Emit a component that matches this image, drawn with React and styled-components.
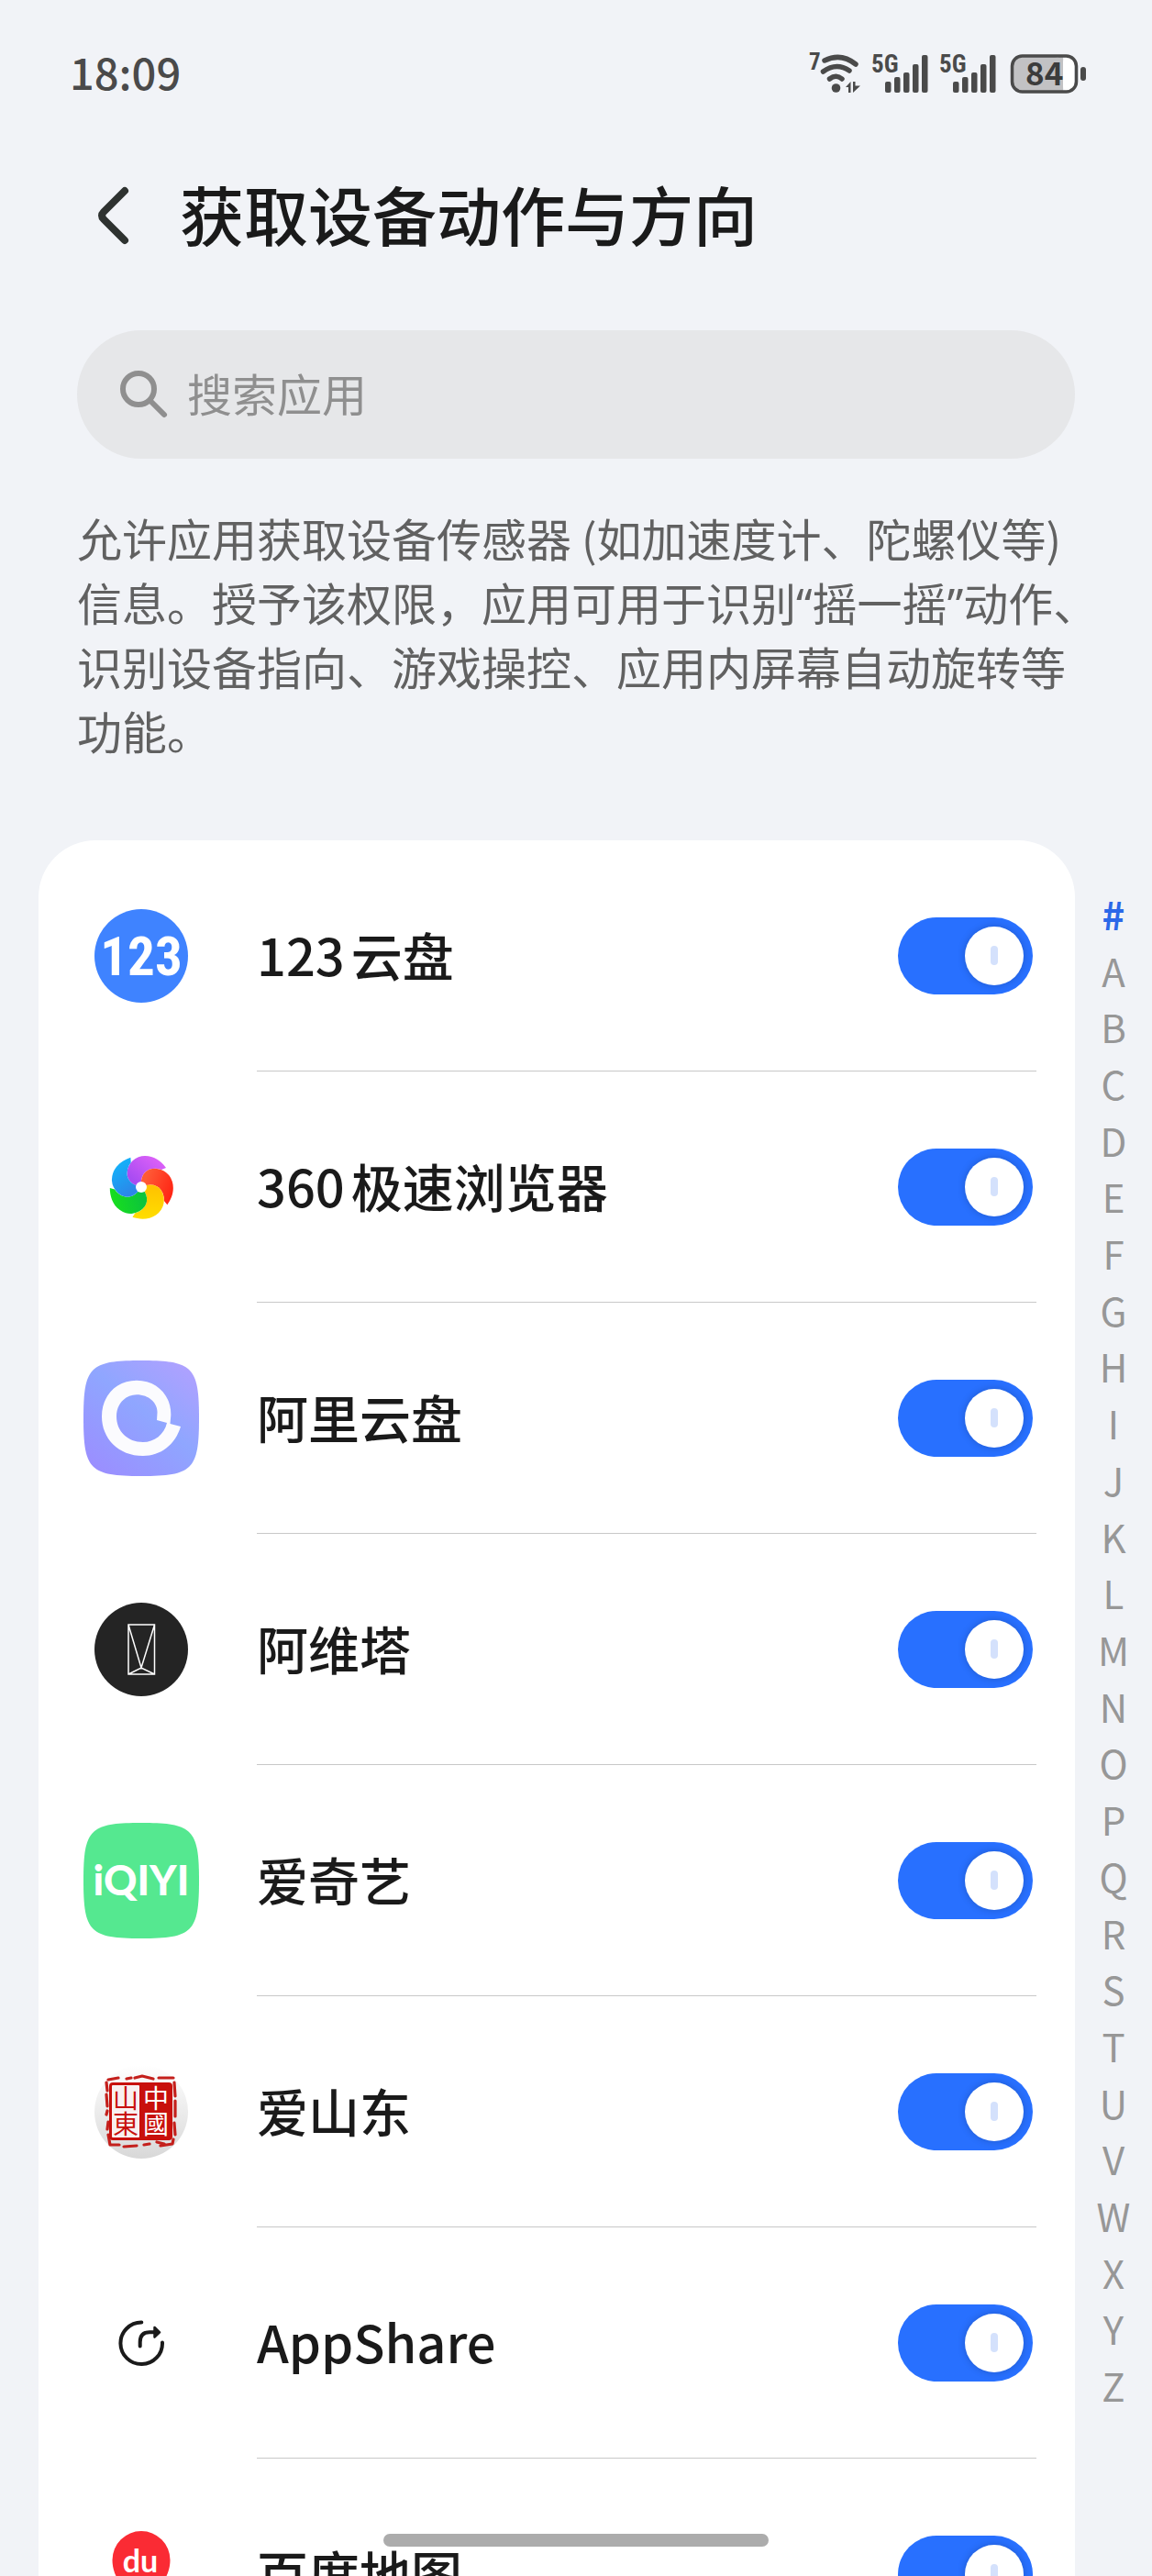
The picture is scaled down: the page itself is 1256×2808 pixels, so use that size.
import React, { useState } from "react";
import styled, { createGlobalStyle } from "styled-components";

const GlobalStyle = createGlobalStyle`
  * {
    box-sizing: border-box;
  }
  body {
    margin: 0;
    background-color: #f1f3f7;
    color: #1a1a1a;
    font-family: "Noto Sans CJK SC", sans-serif;
    text-autospace: normal;
  }
`;

const Page = styled.div`
  display: flex;
  flex-direction: column;
  height: 100vh;
  overflow: hidden;
`;

const StatusBar = styled.div`
  display: flex;
  align-items: center;
  justify-content: space-between;
  flex-shrink: 0;
  height: 160px;
  padding: 0 72px 0 76px;
  color: #4a4a4a;
`;

const Clock = styled.time`
  padding-bottom: 4px;
  font-size: 47px;
  font-weight: 500;
  line-height: 60px;
`;

const StatusIcons = styled.div`
  display: flex;
  align-items: center;
  gap: 12px;
`;

const StatusSvg = styled.svg`
  display: block;
  overflow: visible;
  fill: #4a4a4a;
`;

const Header = styled.header`
  display: flex;
  align-items: center;
  flex-shrink: 0;
  height: 150px;
  padding: 0 84px;
`;

const BackButton = styled.button`
  display: flex;
  align-items: center;
  justify-content: center;
  width: 80px;
  height: 80px;
  margin-right: 32px;
  padding: 0;
  border: none;
  background: none;
  cursor: pointer;
`;

const Title = styled.h1`
  margin: 0;
  padding-bottom: 4px;
  font-size: 70px;
  font-weight: 500;
  line-height: 100px;
`;

const SearchBox = styled.label`
  display: flex;
  align-items: center;
  flex-shrink: 0;
  gap: 20px;
  height: 140px;
  margin: 50px 84px 0;
  padding: 0 46px;
  border-radius: 70px;
  background-color: #e6e7e9;
`;

const SearchInput = styled.input`
  flex: 1;
  min-width: 0;
  padding: 0 0 4px;
  border: none;
  background: none;
  font-family: inherit;
  font-size: 49px;
  line-height: 70px;
  &::placeholder {
    color: #8f8f8f;
    opacity: 1;
  }
  &:focus {
    outline: none;
  }
`;

const Description = styled.p`
  flex-shrink: 0;
  margin: 51px 84px 85px;
  color: #616161;
  font-size: 49px;
  line-height: 70px;
  white-space: nowrap;
`;

const Quote = styled.span`
  font-family: "Noto Sans", sans-serif;
  line-height: 1;
`;

const Content = styled.main`
  display: flex;
  flex: 1;
  min-height: 0;
`;

const AppList = styled.ul`
  flex: 1;
  margin: 0 0 0 42px;
  padding: 0;
  overflow: hidden;
  border-radius: 62px 62px 0 0;
  background-color: white;
  list-style: none;
`;

const AppRow = styled.li`
  display: flex;
  align-items: center;
  gap: 63px;
  height: 252px;
  padding: 0 42px 0 49px;
`;

const AppIcon = styled.svg`
  flex-shrink: 0;
  width: 126px;
  height: 126px;
`;

const AppBody = styled.div`
  display: flex;
  align-items: center;
  justify-content: space-between;
  flex: 1;
  height: 100%;
  padding-right: 4px;
  border-bottom: 1px solid #c8c8c8;
`;

const AppName = styled.label`
  padding-bottom: 4px;
  font-size: 56px;
  font-weight: 500;
  line-height: 80px;
`;

const Switch = styled.input`
  position: relative;
  width: 147px;
  height: 84px;
  margin: 0;
  border-radius: 42px;
  appearance: none;
  background-color: #c4c6cb;
  cursor: pointer;
  &::before {
    content: "";
    position: absolute;
    top: 10px;
    left: 10px;
    width: 64px;
    height: 64px;
    border-radius: 50%;
    background-color: white;
    box-shadow: 0 0 8px rgba(0, 0, 0, 0.2);
  }
  &::after {
    content: "";
    position: absolute;
    top: 31px;
    left: 38px;
    width: 8px;
    height: 21px;
    border-radius: 4px;
    background-color: #d4e1fc;
  }
  &:checked {
    background-color: #2870ff;
  }
  &:checked::before {
    left: 73px;
  }
  &:checked::after {
    left: 101px;
  }
`;

const IndexBar = styled.nav`
  display: flex;
  flex-direction: column;
  width: 84px;
  padding: 49px 0 177px;
`;

const IndexLink = styled.a`
  display: flex;
  align-items: center;
  justify-content: center;
  flex: 1;
  min-height: 0;
  color: ${props => (props.$active ? "#2b68e8" : "#979797")};
  font-size: 42px;
  font-weight: ${props => (props.$active ? 700 : 400)};
  line-height: 42px;
  text-decoration: none;
`;

const HomeBar = styled.div`
  position: fixed;
  bottom: 32px;
  left: 50%;
  width: 420px;
  height: 14px;
  border-radius: 7px;
  background-color: #acacac;
  transform: translateX(-50%);
`;

const narrow = "'Liberation Sans Narrow', 'Roboto Condensed', Roboto, sans-serif";

const Wifi = () => (
  <StatusSvg width="56" height="44" viewBox="0 0 56 44">
    <text x="0" y="18" fontSize="25" fontWeight="700" fontFamily={narrow}>
      7
    </text>
    <g fill="none" stroke="#4a4a4a" strokeWidth="5.5" strokeLinecap="round">
      <path d="M17 8 C29 2 41 4 51 12" />
      <path d="M15.500 20 C25 13 35 13 44 19" />
      <path d="M22.500 28 C27 24.500 32 24.500 36 28" />
    </g>
    <circle cx="29.500" cy="38" r="4.800" />
    <path d="M40 37 L45.500 31 V43 H43 V37 Z M48 31 V43 L56 35.500 H50.500 V31 Z" />
  </StatusSvg>
);

const Signal = () => (
  <StatusSvg width="62" height="44" viewBox="0 0 62 44">
    <text x="0" y="21" fontSize="27" fontWeight="700" fontFamily={narrow}>
      5G
    </text>
    <rect x="15" y="31" width="6.500" height="12" rx="2" />
    <rect x="25" y="26" width="6.500" height="17" rx="2" />
    <rect x="35" y="21" width="6.500" height="22" rx="2" />
    <rect x="45" y="12" width="6.500" height="31" rx="2" />
    <rect x="55" y="2" width="6.500" height="41" rx="2" />
  </StatusSvg>
);

const Battery = () => (
  <StatusSvg width="86" height="44" viewBox="0 0 86 44">
    <rect x="6" y="4" width="55" height="38" rx="9" fill="#c2c2c4" />
    <rect x="61" y="4" width="12" height="38" rx="6" fill="#fff" />
    <rect x="56" y="4" width="5" height="38" fill="#c2c2c4" />
    <rect
      x="5.500"
      y="3"
      width="70"
      height="39"
      rx="11"
      fill="none"
      stroke="#4a4a4a"
      strokeWidth="3.500"
    />
    <rect x="80" y="15" width="6" height="15" rx="3" />
    <text x="20" y="35" fontSize="35" fontWeight="700" fill="#3c3c3c">
      84
    </text>
  </StatusSvg>
);

const BackIcon = () => (
  <svg width="40" height="66" viewBox="0 0 40 66">
    <path
      d="M32 6 L9 29 Q5 33 9 37 L32 60"
      fill="none"
      stroke="#2e3230"
      strokeWidth="8"
      strokeLinecap="round"
    />
  </svg>
);

const SearchIcon = () => (
  <svg width="54" height="54" viewBox="0 0 54 54">
    <g fill="none" stroke="#8f8f8f" strokeWidth="6" strokeLinecap="round">
      <circle cx="21" cy="21" r="17" />
      <path d="M34 34 L49 49" />
    </g>
  </svg>
);

const Pan123Icon = () => (
  <AppIcon viewBox="0 0 126 126">
    <circle cx="63" cy="63" r="51" fill="#3f83ff" />
    <text
      x="63"
      y="84"
      fill="#fff"
      fontSize="59"
      fontWeight="700"
      fontFamily={narrow}
      textAnchor="middle">
      123
    </text>
  </AppIcon>
);

const petals = [
  ["#a94cf2", "#e062f8"],
  ["#ff5a36", "#ff1f10"],
  ["#ffc400", "#ffe100"],
  ["#0cc43c", "#18e01c"],
  ["#2c86e8", "#12b4fb"],
];

const Browser360Icon = () => (
  <AppIcon viewBox="0 0 126 126">
    <defs>
      {petals.map((colors, index) => (
        <linearGradient key={index} id={"petal" + index} x1="0" y1="1" x2="1" y2="0">
          <stop offset="0.200" stopColor={colors[0]} />
          <stop offset="0.900" stopColor={colors[1]} />
        </linearGradient>
      ))}
    </defs>
    <g transform="translate(63 63)">
      {petals.map((colors, index) => (
        <path
          key={index}
          d="M0 0 C-10 -2 -15.500 -8 -15.500 -15 A19.500 19.500 0 0 1 4.500 -34 C14 -34 22 -28 27 -21 L22 -19 A19.500 19.500 0 0 0 9.500 -19.400 C2.800 -17.200 -1.200 -10.100 0 0 Z"
          fill={"url(#petal" + index + ")"}
          transform={"rotate(" + index * 72 + ")"}
        />
      ))}
      <circle r="6" fill="#fff" />
    </g>
  </AppIcon>
);

const squircle =
  "M63 0 C119 0 126 7 126 63 C126 119 119 126 63 126 C7 126 0 119 0 63 C0 7 7 0 63 0 Z";

const AliyunIcon = () => (
  <AppIcon viewBox="0 0 126 126">
    <defs>
      <linearGradient id="aliyun" x1="1" y1="0" x2="0.200" y2="1">
        <stop offset="0" stopColor="#b4a0ff" />
        <stop offset="0.500" stopColor="#8fa6ff" />
        <stop offset="1" stopColor="#9a8fff" />
      </linearGradient>
    </defs>
    <path d={squircle} fill="url(#aliyun)" />
    <path
      fill="#fbfbfe"
      fillRule="evenodd"
      d="M94.500 69 L106 72 C100 92 84 104 65 104 C38 104 20 85 20 61 C20 38 36 21.700 58 21.700 C80 21.700 96 38 95.300 60 Z M80 65 L91 68 C88 81 77 89 65 89 C48 89 36 77 36 61 C36 47 46 37.300 58 37.300 C72 37.300 81 47 80.500 57 Z"
    />
  </AppIcon>
);

const AvatrIcon = () => (
  <AppIcon viewBox="0 0 126 126">
    <circle cx="63" cy="63" r="51" fill="#242424" />
    <path
      d="M49 36 H77.500 V90 H49 Z L63 83 L77.500 36 M49 90 L63 83 L77.500 90"
      fill="none"
      stroke="#fff"
      strokeWidth="1.500"
    />
  </AppIcon>
);

const IqiyiIcon = () => (
  <AppIcon viewBox="0 0 126 126">
    <path d={squircle} fill="#55e890" />
    <text
      x="63"
      y="79"
      fill="#fff"
      fontSize="45"
      fontWeight="900"
      fontFamily="Lato, sans-serif"
      textAnchor="middle">
      iQIYI
    </text>
  </AppIcon>
);

const ShandongIcon = () => (
  <AppIcon viewBox="0 0 126 126">
    <defs>
      <linearGradient id="pearl" x1="0" y1="0" x2="0" y2="1">
        <stop offset="0" stopColor="#ffffff" />
        <stop offset="1" stopColor="#d8d8d8" />
      </linearGradient>
    </defs>
    <circle cx="63" cy="63" r="51" fill="url(#pearl)" />
    <path
      d="M27 28 L38 26 M47 27 L52 26 M56 26 L64 24 L76 27 M82 26 L98 26 M99 31 L100 46 M100 51 L100 68 M99 75 L100 88 M98 93 L97 98 L84 100 M80 96 L88 98 M66 99 L72 98 M58 100 L44 101 M39 99 L29 99 L27 88 M26 82 L27 74 M25 66 L26 62 M26 57 L25 44 M26 40 L25 31"
      fill="none"
      stroke="#c4201c"
      strokeWidth="3.200"
      strokeLinecap="round"
      strokeLinejoin="round"
    />
    <rect x="28" y="31" width="69" height="63" rx="4" fill="#c8100c" />
    <rect x="31" y="34" width="30" height="57" rx="1" fill="#f8f0f0" />
    <text
      fontSize="28"
      textAnchor="middle"
      fontFamily="'Noto Sans CJK TC', sans-serif"
      fill="#c8100c">
      <tspan x="46" y="59">
        山
      </tspan>
      <tspan x="46" y="87">
        東
      </tspan>
      <tspan x="79" y="59" fill="#fff">
        中
      </tspan>
      <tspan x="79" y="87" fill="#fff">
        國
      </tspan>
    </text>
  </AppIcon>
);

const AppShareIcon = () => (
  <AppIcon viewBox="0 0 126 126">
    <g fill="none" stroke="#1a1a1a" strokeWidth="4" strokeLinecap="round">
      <path d="M63.300 40.500 A22.800 22.800 0 1 0 86 62.500" />
      <path d="M61.700 66.500 V62 Q61.700 51.300 72 51.300 H78" />
    </g>
    <path
      d="M77.500 46 L83 51.300 L77.500 56.600 Z"
      fill="#1a1a1a"
      stroke="#1a1a1a"
      strokeWidth="2.500"
      strokeLinejoin="round"
    />
  </AppIcon>
);

const BaiduMapIcon = () => (
  <AppIcon viewBox="0 0 126 126">
    <path
      d="M63 16 A31.500 31.500 0 0 1 94.500 47.500 C94.500 70 76 84 63 104 C50 84 31.500 70 31.500 47.500 A31.500 31.500 0 0 1 63 16 Z"
      fill="#fa2b34"
    />
    <text
      x="62"
      y="61"
      fill="#fff"
      fontSize="34"
      fontWeight="700"
      fontFamily="Lato, sans-serif"
      textAnchor="middle">
      du
    </text>
  </AppIcon>
);

const apps = [
  { id: "pan123", name: "123云盘", Icon: Pan123Icon },
  { id: "browser360", name: "360极速浏览器", Icon: Browser360Icon },
  { id: "aliyun", name: "阿里云盘", Icon: AliyunIcon },
  { id: "avatr", name: "阿维塔", Icon: AvatrIcon },
  { id: "iqiyi", name: "爱奇艺", Icon: IqiyiIcon },
  { id: "shandong", name: "爱山东", Icon: ShandongIcon },
  { id: "appshare", name: "AppShare", Icon: AppShareIcon },
  { id: "baidumap", name: "百度地图", Icon: BaiduMapIcon },
];

const letters = "#ABCDEFGHIJKLMNOPQRSTUVWXYZ".split("");

const AppItem = ({ id, name, Icon }) => {
  const [allowed, setAllowed] = useState(true);

  return (
    <AppRow>
      <Icon />
      <AppBody>
        <AppName htmlFor={id}>{name}</AppName>
        <Switch
          id={id}
          type="checkbox"
          checked={allowed}
          onChange={() => setAllowed(!allowed)}
        />
      </AppBody>
    </AppRow>
  );
};

const App = () => {
  const [keyword, setKeyword] = useState("");
  const [current, setCurrent] = useState("#");

  return (
    <Page>
      <GlobalStyle />
      <StatusBar>
        <Clock>18:09</Clock>
        <StatusIcons>
          <Wifi />
          <Signal />
          <Signal />
          <Battery />
        </StatusIcons>
      </StatusBar>
      <Header>
        <BackButton type="button" aria-label="返回">
          <BackIcon />
        </BackButton>
        <Title>获取设备动作与方向</Title>
      </Header>
      <SearchBox>
        <SearchIcon />
        <SearchInput
          type="text"
          aria-label="搜索应用"
          placeholder="搜索应用"
          value={keyword}
          onChange={event => setKeyword(event.target.value)}
        />
      </SearchBox>
      <Description>
        允许应用获取设备传感器 (如加速度计、陀螺仪等)
        <br />
        信息。授予该权限，应用可用于识别<Quote>“</Quote>摇一摇<Quote>”</Quote>动作、
        <br />
        识别设备指向、游戏操控、应用内屏幕自动旋转等
        <br />
        功能。
      </Description>
      <Content>
        <AppList>
          {apps
            .filter(app => app.name.includes(keyword))
            .map(app => (
              <AppItem key={app.id} {...app} />
            ))}
        </AppList>
        <IndexBar>
          {letters.map(letter => (
            <IndexLink
              key={letter}
              href={"#" + letter}
              $active={letter === current}
              onClick={() => setCurrent(letter)}>
              {letter}
            </IndexLink>
          ))}
        </IndexBar>
      </Content>
      <HomeBar />
    </Page>
  );
};

export default App;
